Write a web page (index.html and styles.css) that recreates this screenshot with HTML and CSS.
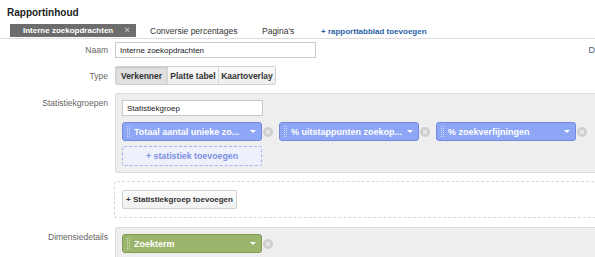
FILE: index.html
```html
<!DOCTYPE html>
<html lang="nl">
<head>
    <meta charset="UTF-8">
    <title>Rapportinhoud</title>
    <link rel="stylesheet" href="styles.css">
</head>
<body>
    <div class="page">
        <h1>Rapportinhoud</h1>

        <div class="tabs">
            <div class="tab active">Interne zoekopdrachten <span class="tab-close">&times;</span></div>
            <div class="tab conv">Conversie percentages</div>
            <div class="tab pag">Pagina's</div>
            <div class="tab add">+ rapporttabblad toevoegen</div>
        </div>

        <div class="row row-naam">
            <div class="label">Naam</div>
            <input class="text-input naam-input" type="text" value="Interne zoekopdrachten">
            <span class="side-link">D</span>
        </div>

        <div class="row row-type">
            <div class="label">Type</div>
            <div class="btn-group">
                <button class="seg active">Verkenner</button>
                <button class="seg">Platte tabel</button>
                <button class="seg">Kaartoverlay</button>
            </div>
        </div>

        <div class="row row-top row-groups">
            <div class="label">Statistiekgroepen</div>
            <div class="panel">
                <input class="text-input group-input" type="text" value="Statistiekgroep">
                <div class="chips">
                    <div class="chip-col">
                        <div class="chip-wrap">
                            <div class="chip blue">
                                <svg class="grip" width="4" height="11" viewBox="0 0 4 11"><g fill="#fff" fill-opacity="0.6"><rect x="0" y="0" width="1" height="1"/><rect x="2" y="0" width="1" height="1"/><rect x="0" y="2" width="1" height="1"/><rect x="2" y="2" width="1" height="1"/><rect x="0" y="4" width="1" height="1"/><rect x="2" y="4" width="1" height="1"/><rect x="0" y="6" width="1" height="1"/><rect x="2" y="6" width="1" height="1"/><rect x="0" y="8" width="1" height="1"/><rect x="2" y="8" width="1" height="1"/><rect x="0" y="10" width="1" height="1"/><rect x="2" y="10" width="1" height="1"/></g></svg>
                                <span class="chip-text">Totaal aantal unieke zo...</span><span class="caret"></span>
                            </div>
                            <span class="remove">&times;</span>
                        </div>
                        <div class="add-metric">+ statistiek toevoegen</div>
                    </div>
                    <div class="chip-wrap">
                        <div class="chip blue">
                            <svg class="grip" width="4" height="11" viewBox="0 0 4 11"><g fill="#fff" fill-opacity="0.6"><rect x="0" y="0" width="1" height="1"/><rect x="2" y="0" width="1" height="1"/><rect x="0" y="2" width="1" height="1"/><rect x="2" y="2" width="1" height="1"/><rect x="0" y="4" width="1" height="1"/><rect x="2" y="4" width="1" height="1"/><rect x="0" y="6" width="1" height="1"/><rect x="2" y="6" width="1" height="1"/><rect x="0" y="8" width="1" height="1"/><rect x="2" y="8" width="1" height="1"/><rect x="0" y="10" width="1" height="1"/><rect x="2" y="10" width="1" height="1"/></g></svg>
                            <span class="chip-text">% uitstappunten zoekop...</span><span class="caret"></span>
                        </div>
                        <span class="remove">&times;</span>
                    </div>
                    <div class="chip-wrap">
                        <div class="chip blue">
                            <svg class="grip" width="4" height="11" viewBox="0 0 4 11"><g fill="#fff" fill-opacity="0.6"><rect x="0" y="0" width="1" height="1"/><rect x="2" y="0" width="1" height="1"/><rect x="0" y="2" width="1" height="1"/><rect x="2" y="2" width="1" height="1"/><rect x="0" y="4" width="1" height="1"/><rect x="2" y="4" width="1" height="1"/><rect x="0" y="6" width="1" height="1"/><rect x="2" y="6" width="1" height="1"/><rect x="0" y="8" width="1" height="1"/><rect x="2" y="8" width="1" height="1"/><rect x="0" y="10" width="1" height="1"/><rect x="2" y="10" width="1" height="1"/></g></svg>
                            <span class="chip-text">% zoekverfijningen</span><span class="caret"></span>
                        </div>
                        <span class="remove">&times;</span>
                    </div>
                </div>
            </div>
        </div>

        <div class="row row-top row-add-group">
            <div class="label"></div>
            <div class="dotted-box">
                <button class="small-btn">+ Statistiekgroep toevoegen</button>
            </div>
        </div>

        <div class="row row-top row-dim">
            <div class="label">Dimensiedetails</div>
            <div class="panel panel-dim">
                <div class="chip-wrap">
                    <div class="chip green">
                        <svg class="grip" width="4" height="11" viewBox="0 0 4 11"><g fill="#fff" fill-opacity="0.6"><rect x="0" y="0" width="1" height="1"/><rect x="2" y="0" width="1" height="1"/><rect x="0" y="2" width="1" height="1"/><rect x="2" y="2" width="1" height="1"/><rect x="0" y="4" width="1" height="1"/><rect x="2" y="4" width="1" height="1"/><rect x="0" y="6" width="1" height="1"/><rect x="2" y="6" width="1" height="1"/><rect x="0" y="8" width="1" height="1"/><rect x="2" y="8" width="1" height="1"/><rect x="0" y="10" width="1" height="1"/><rect x="2" y="10" width="1" height="1"/></g></svg>
                        <span class="chip-text">Zoekterm</span><span class="caret"></span>
                    </div>
                    <span class="remove">&times;</span>
                </div>
            </div>
        </div>
    </div>
</body>
</html>
```

FILE: styles.css
```css
* {
    margin: 0;
    padding: 0;
    box-sizing: border-box;
}

body {
    font-family: "Liberation Sans", Arial, sans-serif;
    font-size: 8.5px;
    color: #333;
    background: #fff;
    overflow: hidden;
}

.page {
    width: 595px;
    padding-top: 7px;
}

h1 {
    font-size: 10px;
    font-weight: bold;
    color: #222;
    margin-left: 7px;
    height: 17px;
    line-height: 12px;
}

.tabs {
    display: flex;
    align-items: flex-end;
    border-bottom: 1px solid #dcdcdc;
    padding-left: 10px;
    height: 15px;
}

.tab {
    font-size: 8.5px;
    color: #333;
    height: 13px;
    line-height: 13px;
    white-space: nowrap;
}

.tab.active {
    background: #6d6d6d;
    color: #fff;
    font-weight: bold;
    font-size: 8px;
    width: 126px;
    padding-left: 13px;
    margin-bottom: 1px;
}

.tab-close {
    color: #bdbdbd;
    margin-left: 9px;
    font-size: 9px;
}

.tab.conv {
    padding-left: 14px;
    width: 126px;
}

.tab.pag {
    width: 59px;
}

.tab.add {
    color: #2a62a6;
    font-weight: bold;
    font-size: 8px;
}

.row {
    display: flex;
    align-items: center;
    gap: 7px;
}

.row-top {
    align-items: flex-start;
}

.label {
    width: 108px;
    flex-shrink: 0;
    text-align: right;
    color: #666;
    font-size: 8.5px;
}

.row-top .label {
    padding-top: 5px;
}

.row-naam {
    margin-top: 3px;
}

.text-input {
    font-family: "Liberation Sans", Arial, sans-serif;
    font-size: 8px;
    color: #222;
    border: 1px solid #c8c8c8;
    height: 16px;
    padding: 0 4px;
    background: #fff;
}

.naam-input {
    width: 207px;
}

.side-link {
    margin-left: 266px;
    color: #4a5a7a;
    font-size: 9px;
    white-space: nowrap;
}

.row-type {
    margin-top: 8px;
}

.btn-group {
    display: flex;
    border: 1px solid #d0d0d0;
    border-radius: 2px;
    height: 19px;
}

.seg {
    font-family: "Liberation Sans", Arial, sans-serif;
    font-size: 8.5px;
    font-weight: bold;
    color: #333;
    background: linear-gradient(#fafafa, #eeeeee);
    border: none;
    border-left: 1px solid #d6d6d6;
    height: 17px;
    white-space: nowrap;
}

.seg:first-child {
    border-left: none;
    width: 51px;
}

.seg:nth-child(2) {
    width: 51px;
}

.seg:nth-child(3) {
    width: 57px;
}

.seg.active {
    background: #e0e0e0;
    box-shadow: inset 0 1px 2px rgba(0, 0, 0, 0.12);
}

.row-groups {
    margin-top: 8px;
}

.panel {
    flex: 1;
    background: #eeeeee;
    border: 1px solid #dadada;
    border-right: none;
    border-radius: 3px 0 0 3px;
    padding: 6px 0 6px 6px;
}

.group-input {
    width: 141px;
}

.chips {
    display: flex;
    align-items: flex-start;
    gap: 6px;
    margin-top: 6px;
}

.chip-wrap {
    display: flex;
    align-items: center;
}

.chip {
    width: 140px;
    height: 19px;
    border-radius: 3px;
    display: flex;
    align-items: center;
    color: #fff;
    font-weight: bold;
    font-size: 9px;
    padding: 0 5px 0 4px;
}

.chip.blue {
    background: #8ea6f6;
    border: 1px solid #7389e0;
}

.chip.green {
    background: #9cb56c;
    border: 1px solid #7f9a52;
}

.grip {
    flex-shrink: 0;
    margin-right: 3px;
}

.chip-text {
    flex: 1;
    white-space: nowrap;
    overflow: hidden;
}

.caret {
    width: 0;
    height: 0;
    border-left: 3px solid transparent;
    border-right: 3px solid transparent;
    border-top: 3px solid #fff;
    margin-left: 4px;
}

.remove {
    width: 10px;
    height: 10px;
    margin-left: 1px;
    border-radius: 50%;
    background: #cfcfcf;
    color: #f2f2f2;
    font-size: 9px;
    line-height: 10px;
    text-align: center;
    font-weight: bold;
}

.add-metric {
    width: 140px;
    height: 20px;
    margin-top: 5px;
    border: 1px dashed #a8b3ec;
    border-radius: 2px;
    background: #eef0fb;
    color: #7e90e4;
    font-weight: bold;
    font-size: 8.8px;
    text-align: center;
    line-height: 18px;
}

.row-add-group {
    margin-top: 8px;
}

.dotted-box {
    flex: 1;
    margin-left: -1px;
    height: 37px;
    border: 1px dashed #d8d8d8;
    border-right: none;
    border-radius: 3px 0 0 3px;
    padding: 8px 0 0 7px;
}

.small-btn {
    font-family: "Liberation Sans", Arial, sans-serif;
    font-size: 8px;
    font-weight: bold;
    color: #333;
    background: linear-gradient(#fcfcfc, #f0f0f0);
    border: 1px solid #d0d0d0;
    border-radius: 2px;
    width: 115px;
    height: 19px;
    white-space: nowrap;
}

.row-dim {
    margin-top: 9px;
}

.panel-dim {
    height: 40px;
}
```
